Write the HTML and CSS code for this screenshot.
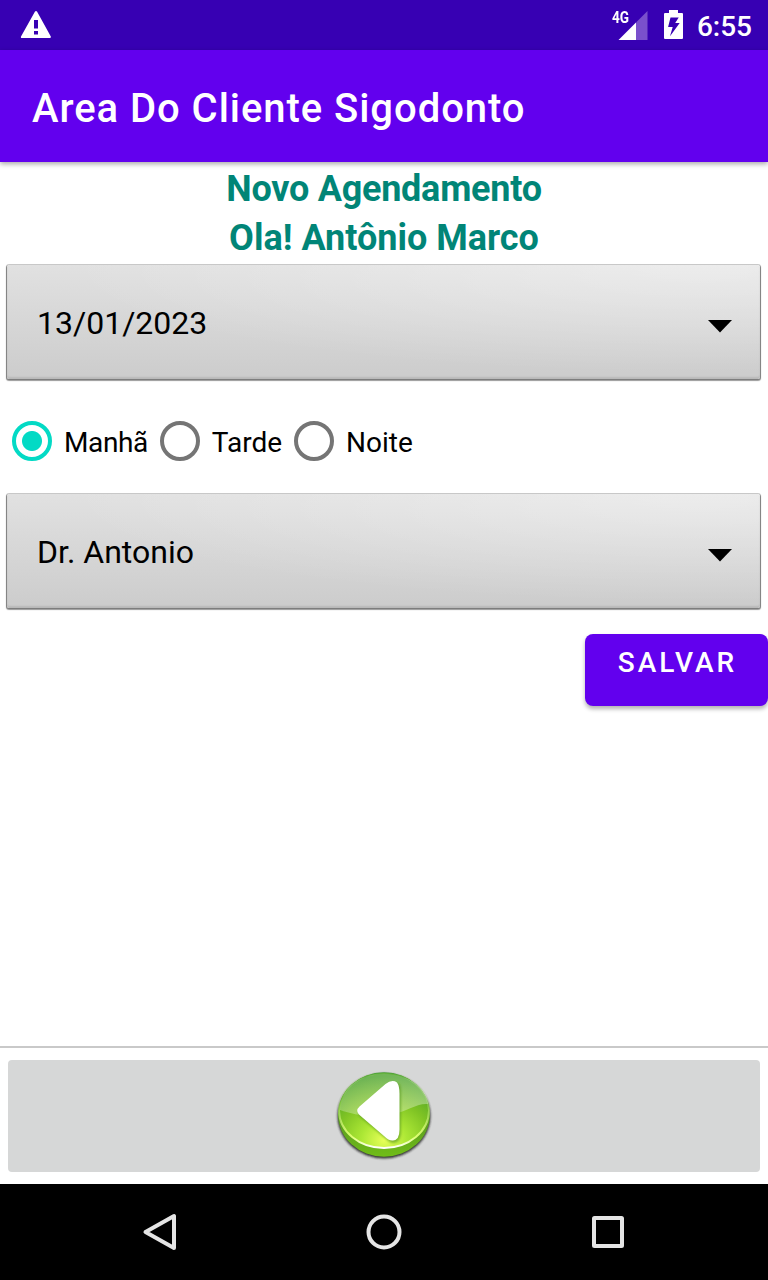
FILE: index.html
```html
<!DOCTYPE html>
<html lang="pt-BR">
<head>
<meta charset="utf-8">
<title>Area Do Cliente Sigodonto</title>
<link rel="stylesheet" href="styles.css">
</head>
<body>
<div class="screen">
  <div class="status-bar">
    <svg class="warning" width="32" height="28" viewBox="0 0 32 28"><path fill="#fff" fill-rule="evenodd" d="M15 .6Q16 -.6 17 .6L30.8 25.5Q31 27 30 27H2Q.5 27 1 25.5ZM14 9v8.5h4V9ZM14 20v3.5h4V20Z"/></svg>
    <div class="status-right">
      <div class="network">
        <svg width="36" height="30" viewBox="0 0 36 30"><path fill="#7a50cc" d="M35.5 0V29H24V11.5Z"/><path fill="#fff" d="M24 11.5V29H6.5Z"/></svg>
        <span class="network-type">4G</span>
      </div>
      <svg class="battery" width="19" height="30" viewBox="0 0 19 30"><path fill="#fff" fill-rule="evenodd" d="M5 0h9v3h4q1 0 1 1v24q0 1-1 1H1q-1 0-1-1V4q0-1 1-1h4ZM6.5 7.5 4.1 17h4.6L6 26.3 15.7 13h-4.5l3.5-5.5Z"/></svg>
      <span class="clock">6:55</span>
    </div>
  </div>
  <header class="app-bar"><h1>Area Do Cliente Sigodonto</h1></header>
  <main class="content">
    <h2 class="heading">Novo Agendamento</h2>
    <h2>Ola! Antônio Marco</h2>
    <div class="spinner date"><span>13/01/2023</span><svg width="24" height="13" viewBox="0 0 24 13"><path d="M0 0H24L12 12.5Z"/></svg></div>
    <div class="radios">
      <label class="radio"><span class="ring checked"></span><span class="morning">Manhã</span></label>
      <label class="radio"><span class="ring"></span>Tarde</label>
      <label class="radio"><span class="ring"></span>Noite</label>
    </div>
    <div class="spinner"><span>Dr. Antonio</span><svg width="24" height="13" viewBox="0 0 24 13"><path d="M0 0H24L12 12.5Z"/></svg></div>
    <button class="save">SALVAR</button>
  </main>
  <footer class="footer">
    <button class="back" aria-label="Voltar">
      <svg width="100" height="92" viewBox="0 0 100 92">
        <defs>
          <radialGradient id="face" cx=".5" cy=".9" r=".85"><stop offset="0" stop-color="#e6ff58"/><stop offset=".3" stop-color="#ace735"/><stop offset=".62" stop-color="#80c424"/><stop offset="1" stop-color="#48a026"/></radialGradient>
          <linearGradient id="edge" x2="0" y2="1"><stop offset="0" stop-color="#218421"/><stop offset=".6" stop-color="#5c9d20"/><stop offset="1" stop-color="#70bd18"/></linearGradient>
          <linearGradient id="gloss" x2="1" y2="1"><stop offset="0" stop-color="#fff" stop-opacity=".18"/><stop offset="1" stop-color="#fff" stop-opacity=".36"/></linearGradient>
          <linearGradient id="rim" x2="0" y2="1"><stop offset=".35" stop-color="#c3ef85" stop-opacity=".25"/><stop offset=".85" stop-color="#dfff72"/><stop offset="1" stop-color="#fff"/></linearGradient>
          <filter id="soft" x="-10%" y="-10%" width="120%" height="120%"><feGaussianBlur stdDeviation="1.2"/></filter>
        </defs>
        <ellipse cx="50" cy="46" rx="46.5" ry="42.5" fill="#222" opacity=".9" filter="url(#soft)"/>
        <ellipse cx="50" cy="44.5" rx="46" ry="42.2" fill="url(#edge)"/>
        <ellipse cx="50" cy="40.5" rx="45" ry="37.5" fill="url(#face)" stroke="url(#rim)" stroke-width="2"/>
        <path d="M6 40C7 17 27 4 50 4S94 18 94 34C82 33 73 42 58 44C38 48 20 45 6 40Z" fill="url(#gloss)"/>
        <path d="M26 38 52 16Q61 10 66 15Q67 17 67 25V61Q67 73 59 73Q56 73 51 68L26 47Q22 42 26 38Z" fill="#5c9b20" opacity=".65" filter="url(#soft)"/>
        <path d="M25.5 36.5 51.5 14Q58 9 63 12.5Q65.5 16 65.5 23.5V59.5Q65.5 70 59 70.5Q55 71 50 66L25.5 45Q21 40.5 25.5 36.5Z" fill="#fff"/>
      </svg>
    </button>
  </footer>
  <nav class="nav-bar">
    <svg viewBox="0 0 48 48"><path d="M38 8V40L9.5 24Z"/></svg>
    <svg viewBox="0 0 48 48"><circle cx="24" cy="24" r="15.5"/></svg>
    <svg viewBox="0 0 48 48"><rect x="10" y="10" width="28" height="28" rx=".5"/></svg>
  </nav>
</div>
</body>
</html>
```
FILE: styles.css
```css
* { box-sizing: border-box; }
body { margin: 0; background: #fff; color: #000; font-family: Roboto, sans-serif; }
svg { display: block; flex: none; }
h1, h2 { margin: 0; }
button { border: 0; font-family: inherit; }
.screen { width: 768px; height: 1280px; display: flex; flex-direction: column; overflow: hidden; }
.status-bar { height: 50px; flex: none; display: flex; justify-content: space-between; padding: 11px 16px 0 20px; background: #3700b3; color: #fff; }
.status-right { display: flex; }
.network { position: relative; margin-right: 16px; }
.network-type { position: absolute; left: 0; top: -2px; font-size: 16px; line-height: 18px; font-weight: 700; transform: scaleX(.85); transform-origin: left; }
.battery { margin-top: -1px; margin-right: 14px; }
.clock { font-size: 28px; line-height: 32px; font-weight: 500; }
.app-bar { height: 112px; flex: none; padding: 33px 32px 0; background: #6200ee; color: #fff; box-shadow: 0 2px 5px rgba(0,0,0,.35); }
.app-bar h1 { font-size: 40px; line-height: 52px; font-weight: 500; letter-spacing: .95px; white-space: nowrap; }
.content { flex: 1; padding-top: 3px; display: flex; flex-direction: column; }
.content h2 { text-align: center; color: #018577; font-size: 36px; line-height: 49px; font-weight: 700; }
.content .heading { letter-spacing: -.25px; }
.spinner { height: 114px; flex: none; margin: 0 8px 0 7px; padding: 2px 28px 0 30px; display: flex; align-items: center; justify-content: space-between; font-size: 32px; border-radius: 2px; background: radial-gradient(ellipse 85% 95% at 92% 0, rgba(255,255,255,.38), transparent), linear-gradient(180deg, #e1e1e1, #cdcdcd 95%); box-shadow: 0 0 0 1px rgba(0,0,0,.18), 0 1px 1px 1px rgba(0,0,0,.4), inset 0 -2px 2px rgba(0,0,0,.1); }
.spinner.date { margin-top: 2px; }
.spinner svg { margin-top: 7px; }
.radios { height: 115px; padding: 12px 12px 0; display: flex; align-items: center; gap: 12px; }
.radio { display: flex; align-items: center; gap: 12px; font-size: 28px; }
.morning { letter-spacing: -.4px; }
.ring { width: 40px; height: 40px; margin-top: -3px; border: 4px solid #757575; border-radius: 50%; }
.ring.checked { border-color: #03dac5; background: radial-gradient(circle, #03dac5 9.5px, transparent 10.5px); }
.save { align-self: flex-end; width: 183px; height: 72px; margin-top: 26px; padding: 0 0 15px 2px; border-radius: 8px; background: #6200ee; color: #fff; font-size: 28px; font-weight: 500; letter-spacing: 3px; box-shadow: 0 3px 4px rgba(0,0,0,.3); }
.footer { height: 138px; flex: none; padding: 12px 8px; border-top: 2px solid #c9c9c9; }
.back { width: 100%; height: 112px; padding: 10px 0; display: flex; justify-content: center; border-radius: 4px; background: #d6d7d7; }
.nav-bar { height: 96px; flex: none; display: grid; grid-template-columns: repeat(3, 48px); justify-content: center; align-items: center; gap: 176px; background: #000; }
.nav-bar svg { width: 48px; height: 48px; fill: none; stroke: #e5e5e5; stroke-width: 4; stroke-linejoin: round; }
```
